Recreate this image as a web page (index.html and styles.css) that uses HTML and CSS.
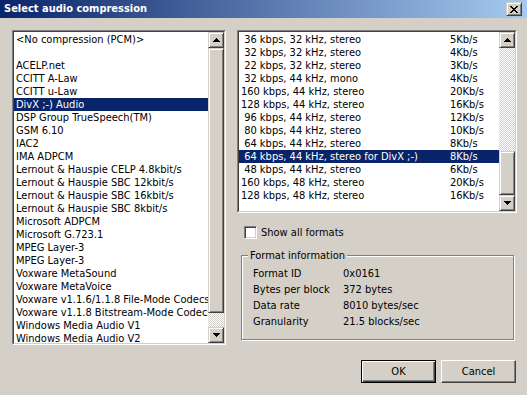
FILE: index.html
```html
<!DOCTYPE html>
<html>
<head>
<meta charset="utf-8">
<title>Select audio compression</title>
<link rel="stylesheet" href="styles.css">
</head>
<body>
<div class="window">
  <div class="titlebar">
    <span class="title">Select audio compression</span>
    <button class="close" aria-label="Close">
      <svg width="8" height="7" viewBox="0 0 8 7" shape-rendering="crispEdges"><path d="M0 0h2v1h1v1h2V1h1V0h2v1H7v1H6v1H5v1h1v1h1v1h1v1H6V6H5V5H3v1H2v1H0V6h1V5h1V4h1V3H2V2H1V1H0z" fill="#000"/></svg>
    </button>
  </div>
  <div class="content">
    <div class="main">
      <div class="listbox left">
        <div class="listbox-inner">
          <div class="items">
            <div class="item">&lt;No compression (PCM)&gt;</div>
            <div class="item"></div>
            <div class="item">ACELP.net</div>
            <div class="item">CCITT A-Law</div>
            <div class="item">CCITT u-Law</div>
            <div class="item sel">DivX ;-) Audio</div>
            <div class="item">DSP Group TrueSpeech(TM)</div>
            <div class="item">GSM 6.10</div>
            <div class="item">IAC2</div>
            <div class="item">IMA ADPCM</div>
            <div class="item">Lernout &amp; Hauspie CELP 4.8kbit/s</div>
            <div class="item">Lernout &amp; Hauspie SBC 12kbit/s</div>
            <div class="item">Lernout &amp; Hauspie SBC 16kbit/s</div>
            <div class="item">Lernout &amp; Hauspie SBC 8kbit/s</div>
            <div class="item">Microsoft ADPCM</div>
            <div class="item">Microsoft G.723.1</div>
            <div class="item">MPEG Layer-3</div>
            <div class="item">MPEG Layer-3</div>
            <div class="item">Voxware MetaSound</div>
            <div class="item">Voxware MetaVoice</div>
            <div class="item">Voxware v1.1.6/1.1.8 File-Mode Codecs</div>
            <div class="item">Voxware v1.1.8 Bitstream-Mode Codecs</div>
            <div class="item">Windows Media Audio V1</div>
            <div class="item">Windows Media Audio V2</div>
          </div>
          <div class="scrollbar">
            <div class="sb-btn"><svg width="7" height="4" viewBox="0 0 7 4" shape-rendering="crispEdges"><path d="M3 0h1v1h1v1h1v1h1v1H0V3h1V2h1V1h1z" fill="#000"/></svg></div>
            <div class="thumb left-thumb"></div>
            <div class="track"></div>
            <div class="sb-btn"><svg width="7" height="4" viewBox="0 0 7 4" shape-rendering="crispEdges"><path d="M0 0h7v1H6v1H5v1H4v1H3V3H2V2H1V1H0z" fill="#000"/></svg></div>
          </div>
        </div>
      </div>
      <div class="rightcol">
        <div class="listbox right">
          <div class="listbox-inner">
            <div class="items">
              <div class="item fmt"><span class="c1"> 36 kbps, 32 kHz, stereo</span><span>5Kb/s</span></div>
              <div class="item fmt"><span class="c1"> 32 kbps, 32 kHz, stereo</span><span>4Kb/s</span></div>
              <div class="item fmt"><span class="c1"> 22 kbps, 32 kHz, stereo</span><span>3Kb/s</span></div>
              <div class="item fmt"><span class="c1"> 32 kbps, 44 kHz, mono</span><span>4Kb/s</span></div>
              <div class="item fmt"><span class="c1">160 kbps, 44 kHz, stereo</span><span>20Kb/s</span></div>
              <div class="item fmt"><span class="c1">128 kbps, 44 kHz, stereo</span><span>16Kb/s</span></div>
              <div class="item fmt"><span class="c1"> 96 kbps, 44 kHz, stereo</span><span>12Kb/s</span></div>
              <div class="item fmt"><span class="c1"> 80 kbps, 44 kHz, stereo</span><span>10Kb/s</span></div>
              <div class="item fmt"><span class="c1"> 64 kbps, 44 kHz, stereo</span><span>8Kb/s</span></div>
              <div class="item fmt sel"><span class="c1"> 64 kbps, 44 kHz, stereo for DivX ;-)</span><span>8Kb/s</span></div>
              <div class="item fmt"><span class="c1"> 48 kbps, 44 kHz, stereo</span><span>6Kb/s</span></div>
              <div class="item fmt"><span class="c1">160 kbps, 48 kHz, stereo</span><span>20Kb/s</span></div>
              <div class="item fmt"><span class="c1">128 kbps, 48 kHz, stereo</span><span>16Kb/s</span></div>
            </div>
            <div class="scrollbar">
              <div class="sb-btn"><svg width="7" height="4" viewBox="0 0 7 4" shape-rendering="crispEdges"><path d="M3 0h1v1h1v1h1v1h1v1H0V3h1V2h1V1h1z" fill="#000"/></svg></div>
              <div class="track"></div>
              <div class="thumb right-thumb"></div>
              <div class="sb-btn"><svg width="7" height="4" viewBox="0 0 7 4" shape-rendering="crispEdges"><path d="M0 0h7v1H6v1H5v1H4v1H3V3H2V2H1V1H0z" fill="#000"/></svg></div>
            </div>
          </div>
        </div>
        <label class="check"><span class="box"></span><span>Show all formats</span></label>
        <fieldset class="group">
          <legend>Format information</legend>
          <div class="info">
            <span>Format ID</span><span>0x0161</span>
            <span>Bytes per block</span><span>372 bytes</span>
            <span>Data rate</span><span>8010 bytes/sec</span>
            <span>Granularity</span><span>21.5 blocks/sec</span>
          </div>
        </fieldset>
      </div>
    </div>
    <div class="buttons">
      <button class="btn default">OK</button>
      <button class="btn">Cancel</button>
    </div>
  </div>
</div>
</body>
</html>
```
FILE: styles.css
```css
* { box-sizing: border-box; }
body {
  margin: 0;
  background: #d4d0c8;
  font-family: "DejaVu Sans Condensed", "Liberation Sans", sans-serif;
  font-size: 11px;
  color: #000;
}
.window {
  width: 527px;
  height: 395px;
  background: #d4d0c8;
  overflow: hidden;
}
.titlebar {
  height: 18px;
  display: flex;
  align-items: center;
  justify-content: space-between;
  padding: 0 5px 0 4px;
  background: linear-gradient(to right, #0a246a, #a6caf0);
}
.title {
  color: #fff;
  font-weight: bold;
  font-size: 11px;
  line-height: 18px;
}
.close {
  width: 16px;
  height: 14px;
  padding: 0;
  margin: 0;
  display: flex;
  align-items: center;
  justify-content: center;
  background: #d4d0c8;
  border: 1px solid;
  border-color: #d4d0c8 #404040 #404040 #d4d0c8;
  box-shadow: inset 1px 1px #fff, inset -1px -1px #808080;
}
.content {
  padding: 12px 10px 0 12px;
}
.main {
  display: flex;
  gap: 11px;
}
.listbox {
  border: 1px solid;
  border-color: #808080 #fff #fff #808080;
  background: #fff;
}
.listbox-inner {
  height: 100%;
  border: 1px solid;
  border-color: #404040 #d4d0c8 #d4d0c8 #404040;
  display: flex;
}
.listbox.left {
  width: 214px;
  height: 315px;
}
.items {
  flex: 1;
  min-width: 0;
  padding-top: 1px;
  overflow: hidden;
}
.item {
  height: 13px;
  line-height: 13px;
  padding-left: 2px;
  white-space: pre;
  overflow: hidden;
}
.item.sel {
  background: #0a246a;
  color: #fff;
}
.fmt {
  display: grid;
  grid-template-columns: 209px auto;
}
.scrollbar {
  width: 16px;
  flex: none;
  display: flex;
  flex-direction: column;
  background-color: #d4d0c8;
  background-image: conic-gradient(#fff 25%, #d4d0c8 0 50%, #fff 0 75%, #d4d0c8 0);
  background-size: 2px 2px;
}
.sb-btn, .thumb {
  background: #d4d0c8;
  border: 1px solid;
  border-color: #d4d0c8 #404040 #404040 #d4d0c8;
  box-shadow: inset 1px 1px #fff, inset -1px -1px #808080;
}
.sb-btn {
  height: 16px;
  flex: none;
  display: flex;
  align-items: center;
  justify-content: center;
}
.sb-btn svg { display: block; }
.left-thumb { height: 265px; flex: none; }
.right-thumb { height: 44px; flex: none; }
.track { flex: 1; }
.rightcol {
  width: 280px;
  display: flex;
  flex-direction: column;
}
.listbox.right {
  height: 183px;
}
.check {
  display: flex;
  align-items: center;
  gap: 4px;
  margin: 13px 0 0 7px;
  height: 13px;
  line-height: 13px;
}
.box {
  width: 13px;
  height: 13px;
  flex: none;
  background: #fff;
  border: 1px solid;
  border-color: #808080 #fff #fff #808080;
  box-shadow: inset 1px 1px #404040, inset -1px -1px #d4d0c8;
}
.group {
  margin: 10px 3px 0 4px;
  padding: 0;
  min-width: 0;
  height: 91px;
  border: 1px solid #808080;
  box-shadow: inset 1px 1px #fff, 1px 1px #fff;
}
.group legend {
  margin-left: 6px;
  padding: 0 2px;
  line-height: 13px;
  background: #d4d0c8;
}
.info {
  display: grid;
  grid-template-columns: 90px auto;
  grid-auto-rows: 16px;
  line-height: 16px;
  margin: 4px 0 0 11px;
}
.buttons {
  display: flex;
  justify-content: flex-end;
  gap: 5px;
  margin-top: 15px;
  padding-right: 1px;
}
.btn {
  width: 75px;
  height: 23px;
  padding: 0;
  font: inherit;
  color: #000;
  background: #d4d0c8;
  border: 1px solid;
  border-color: #fff #404040 #404040 #fff;
  box-shadow: inset -1px -1px #808080;
}
.btn.default {
  border-color: #000;
  box-shadow: inset 1px 1px #fff, inset -1px -1px #404040, inset -2px -2px #808080;
}
```
